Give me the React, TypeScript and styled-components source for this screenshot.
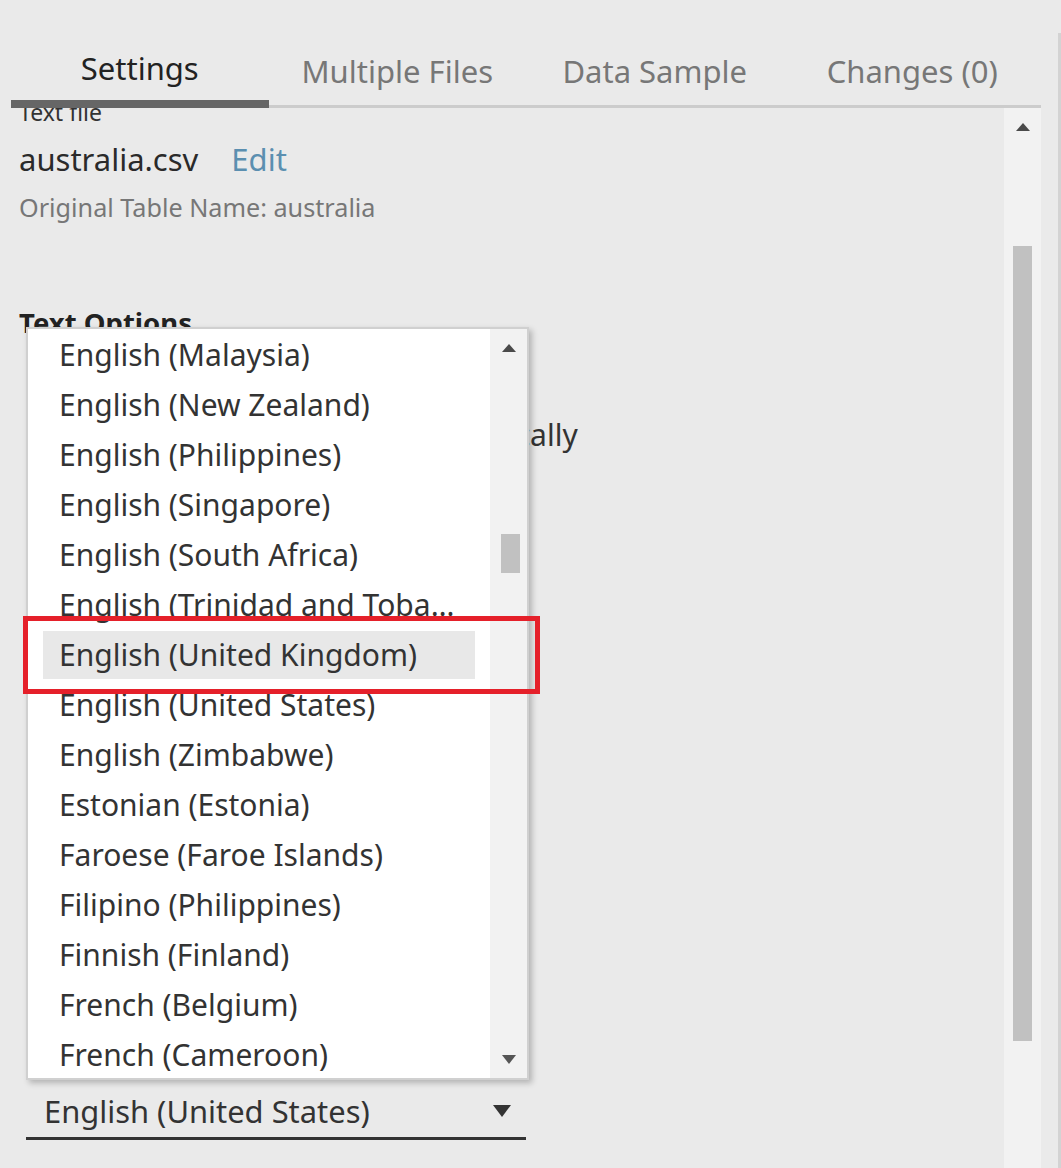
import styled, { createGlobalStyle } from "styled-components";

const FONT = `"Noto Sans", "Open Sans", sans-serif`;

const GlobalStyle = createGlobalStyle`
  html, body {
    margin: 0;
    padding: 0;
    background: #eaeaea;
    font-family: ${FONT};
    overflow: hidden;
  }
  * { box-sizing: border-box; }
`;

const tabs = ["Settings", "Multiple Files", "Data Sample", "Changes (0)"];

const locales = [
  "English (Malaysia)",
  "English (New Zealand)",
  "English (Philippines)",
  "English (Singapore)",
  "English (South Africa)",
  "English (Trinidad and Tobago)",
  "English (United Kingdom)",
  "English (United States)",
  "English (Zimbabwe)",
  "Estonian (Estonia)",
  "Faroese (Faroe Islands)",
  "Filipino (Philippines)",
  "Finnish (Finland)",
  "French (Belgium)",
  "French (Cameroon)",
];

export default function App() {
  return (
    <Frame>
      <GlobalStyle />
      <Panel>
        <TabBar>
          {tabs.map((t, i) => (
            <Tab key={t} $active={i === 0}>
              {t}
            </Tab>
          ))}
        </TabBar>
        <Body>
          <Content>
            <SmallLabel>Text file</SmallLabel>
            <FileRow>
              <FileName>australia.csv</FileName>
              <EditLink>Edit</EditLink>
            </FileRow>
            <Meta>Original Table Name: australia</Meta>
            <SectionTitle>Text Options</SectionTitle>
            <RadioRow>
              <Radio />
              Generate field names automatically
            </RadioRow>
            <SelectWrap>
              <SelectValue>English (United States)</SelectValue>
              <Caret $size={9} />
              <ListBox>
                <Options>
                  {locales.map((l) => (
                    <Option key={l}>
                      <OptionLabel $selected={l === "English (United Kingdom)"}>
                        {l}
                      </OptionLabel>
                    </Option>
                  ))}
                </Options>
                <ListTrack>
                  <ArrowUp $size={7} />
                  <ListThumb />
                  <Grow />
                  <Caret $size={7} $color="#555" />
                </ListTrack>
                <Highlight />
              </ListBox>
            </SelectWrap>
          </Content>
          <ScrollTrack>
            <ArrowUp $size={7} />
            <Thumb />
          </ScrollTrack>
        </Body>
      </Panel>
      <EdgeLine />
    </Frame>
  );
}

const Frame = styled.div`
  display: flex;
  width: 1061px;
  height: 1168px;
  background: #eaeaea;
`;

const Panel = styled.div`
  flex: 1;
  display: flex;
  flex-direction: column;
  padding-right: 17px;
  min-width: 0;
`;

const EdgeLine = styled.div`
  width: 3px;
  margin-top: 33px;
  background: #d3d3d3;
`;

const TabBar = styled.div`
  display: flex;
  height: 108px;
  margin-left: 11px;
`;

const Tab = styled.div<{ $active?: boolean }>`
  flex: 1;
  display: flex;
  justify-content: center;
  align-items: center;
  padding-top: 36px;
  font-size: 31px;
  color: ${(p) => (p.$active ? "#222" : "#777")};
  border-bottom: ${(p) => (p.$active ? "8px solid #666" : "3px solid #cccccc")};
`;

const Body = styled.div`
  flex: 1;
  display: flex;
  overflow: hidden;
`;

const Content = styled.div`
  flex: 1;
  display: flex;
  flex-direction: column;
  align-items: flex-start;
  padding-left: 19px;
  margin-top: -8px;
  color: #333;
`;

const SmallLabel = styled.div`
  font-size: 23px;
  line-height: 24px;
  color: #333;
`;

const FileRow = styled.div`
  display: flex;
  gap: 33px;
  margin-top: 17px;
  font-size: 31px;
  line-height: 36px;
`;

const FileName = styled.span`
  color: #2a2a2a;
`;

const EditLink = styled.span`
  color: #5b8fb0;
`;

const Meta = styled.div`
  margin-top: 15px;
  font-size: 25.2px;
  line-height: 30px;
  color: #777;
`;

const SectionTitle = styled.div`
  margin-top: 86px;
  font-size: 27.5px;
  line-height: 30px;
  font-weight: 700;
  color: #222;
`;

const RadioRow = styled.div`
  display: flex;
  align-items: center;
  gap: 12px;
  margin-top: 79px;
  margin-left: 25px;
  font-size: 30px;
  line-height: 36px;
  color: #333;
`;

const Radio = styled.span`
  width: 22px;
  height: 22px;
  border: 2px solid #777;
  border-radius: 50%;
`;

const SelectWrap = styled.div`
  position: relative;
  display: flex;
  align-items: center;
  justify-content: space-between;
  width: 500px;
  height: 55px;
  margin-top: 632px;
  margin-left: 7px;
  padding: 0 15px 0 18px;
  border-bottom: 3px solid #333;
`;

const SelectValue = styled.span`
  font-size: 30.9px;
  color: #333;
`;

const Caret = styled.span<{ $size: number; $color?: string }>`
  width: 0;
  height: 0;
  border-left: ${(p) => p.$size}px solid transparent;
  border-right: ${(p) => p.$size}px solid transparent;
  border-top: ${(p) => Math.round(p.$size * 1.35)}px solid ${(p) => p.$color || "#333"};
`;

const ArrowUp = styled.span<{ $size: number }>`
  width: 0;
  height: 0;
  border-left: ${(p) => p.$size}px solid transparent;
  border-right: ${(p) => p.$size}px solid transparent;
  border-bottom: ${(p) => Math.round(p.$size * 1.15)}px solid #4a4a4a;
`;

const ListBox = styled.div`
  position: absolute;
  left: 0;
  bottom: calc(100% + 5px);
  width: 503px;
  height: 753px;
  display: flex;
  background: #fff;
  border: 2px solid #d0d0d0;
  box-shadow: 3px 3px 6px rgba(0, 0, 0, 0.24);
`;

const Options = styled.div`
  flex: 1;
  overflow: hidden;
  padding-top: 1px;
`;

const Option = styled.div`
  height: 50px;
  padding: 1px 15px;
`;

const OptionLabel = styled.div<{ $selected?: boolean }>`
  height: 48px;
  line-height: 48px;
  padding: 0 20px 0 16px;
  font-size: 30px;
  color: #333;
  white-space: nowrap;
  overflow: hidden;
  text-overflow: ellipsis;
  background: ${(p) => (p.$selected ? "#e8e8e8" : "transparent")};
`;

const ListTrack = styled.div`
  width: 37px;
  display: flex;
  flex-direction: column;
  align-items: center;
  padding: 15px 0 14px;
  background: #f2f2f2;
`;

const ListThumb = styled.div`
  width: 19px;
  height: 39px;
  margin-top: 182px;
  margin-left: 4px;
  background: #c1c1c1;
`;

const Grow = styled.div`
  flex: 1;
`;

const Highlight = styled.div`
  position: absolute;
  left: -5px;
  top: 287px;
  width: 517px;
  height: 78px;
  border: 5px solid #e5202a;
`;

const ScrollTrack = styled.div`
  width: 37px;
  display: flex;
  flex-direction: column;
  align-items: center;
  padding-top: 15px;
  background: #f2f2f2;
`;

const Thumb = styled.div`
  width: 19px;
  height: 795px;
  margin-top: 115px;
  background: #c1c1c1;
`;
